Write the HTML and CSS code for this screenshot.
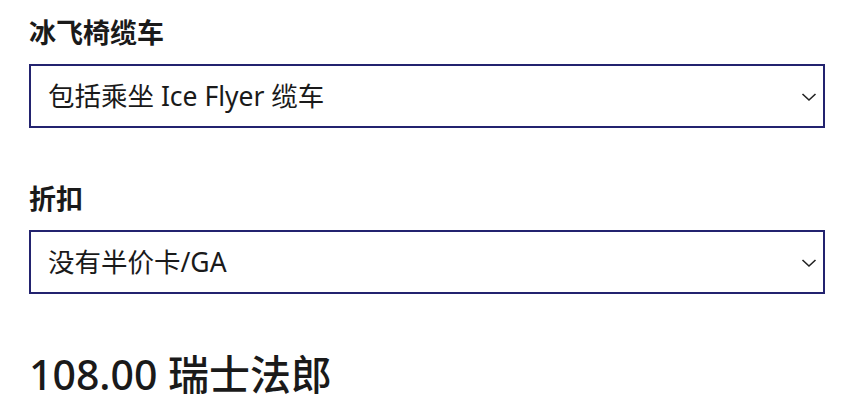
FILE: index.html
```html
<!DOCTYPE html>
<html lang="zh-CN">
<head>
<meta charset="utf-8">
<title>冰飞椅缆车</title>
<link rel="stylesheet" href="styles.css">
</head>
<body>
<main class="form">
  <div class="field field-first">
    <label class="field-label">冰飞椅缆车</label>
    <div class="select" role="combobox">
      <span class="select-value">包括乘坐 Ice Flyer 缆车</span>
      <svg class="chevron" width="16" height="10" viewBox="0 0 16 10" aria-hidden="true"><path d="M1.5 2 L8 8 L14.5 2" fill="none" stroke="#222" stroke-width="1.6"/></svg>
    </div>
  </div>
  <div class="field">
    <label class="field-label">折扣</label>
    <div class="select" role="combobox">
      <span class="select-value">没有半价卡/GA</span>
      <svg class="chevron" width="16" height="10" viewBox="0 0 16 10" aria-hidden="true"><path d="M1.5 2 L8 8 L14.5 2" fill="none" stroke="#222" stroke-width="1.6"/></svg>
    </div>
  </div>
  <div class="price">108.00 瑞士法郎</div>
</main>
</body>
</html>
```
FILE: styles.css
```css
html, body {
  margin: 0;
  padding: 0;
  background: #ffffff;
}
body {
  font-family: "Noto Sans", "Noto Sans CJK SC", sans-serif;
  color: #1a1a1a;
}
.form {
  display: flex;
  flex-direction: column;
  padding: 16px 27px 0 29px;
}
.field {
  display: flex;
  flex-direction: column;
  gap: 14px;
}
.field + .field {
  margin-top: 54px;
}
.field-label {
  font-size: 27px;
  line-height: 34px;
  font-weight: 700;
}
.select {
  display: flex;
  align-items: center;
  justify-content: space-between;
  height: 64px;
  box-sizing: border-box;
  border: 2px solid #23236f;
  padding: 0 6px 0 17px;
}
.select-value {
  font-size: 26.5px;
  line-height: 34px;
}
.chevron {
  display: block;
  margin-top: 2px;
}
.price {
  margin-top: 56px;
  font-size: 41px;
  line-height: 48px;
  font-weight: 500;
}
```
